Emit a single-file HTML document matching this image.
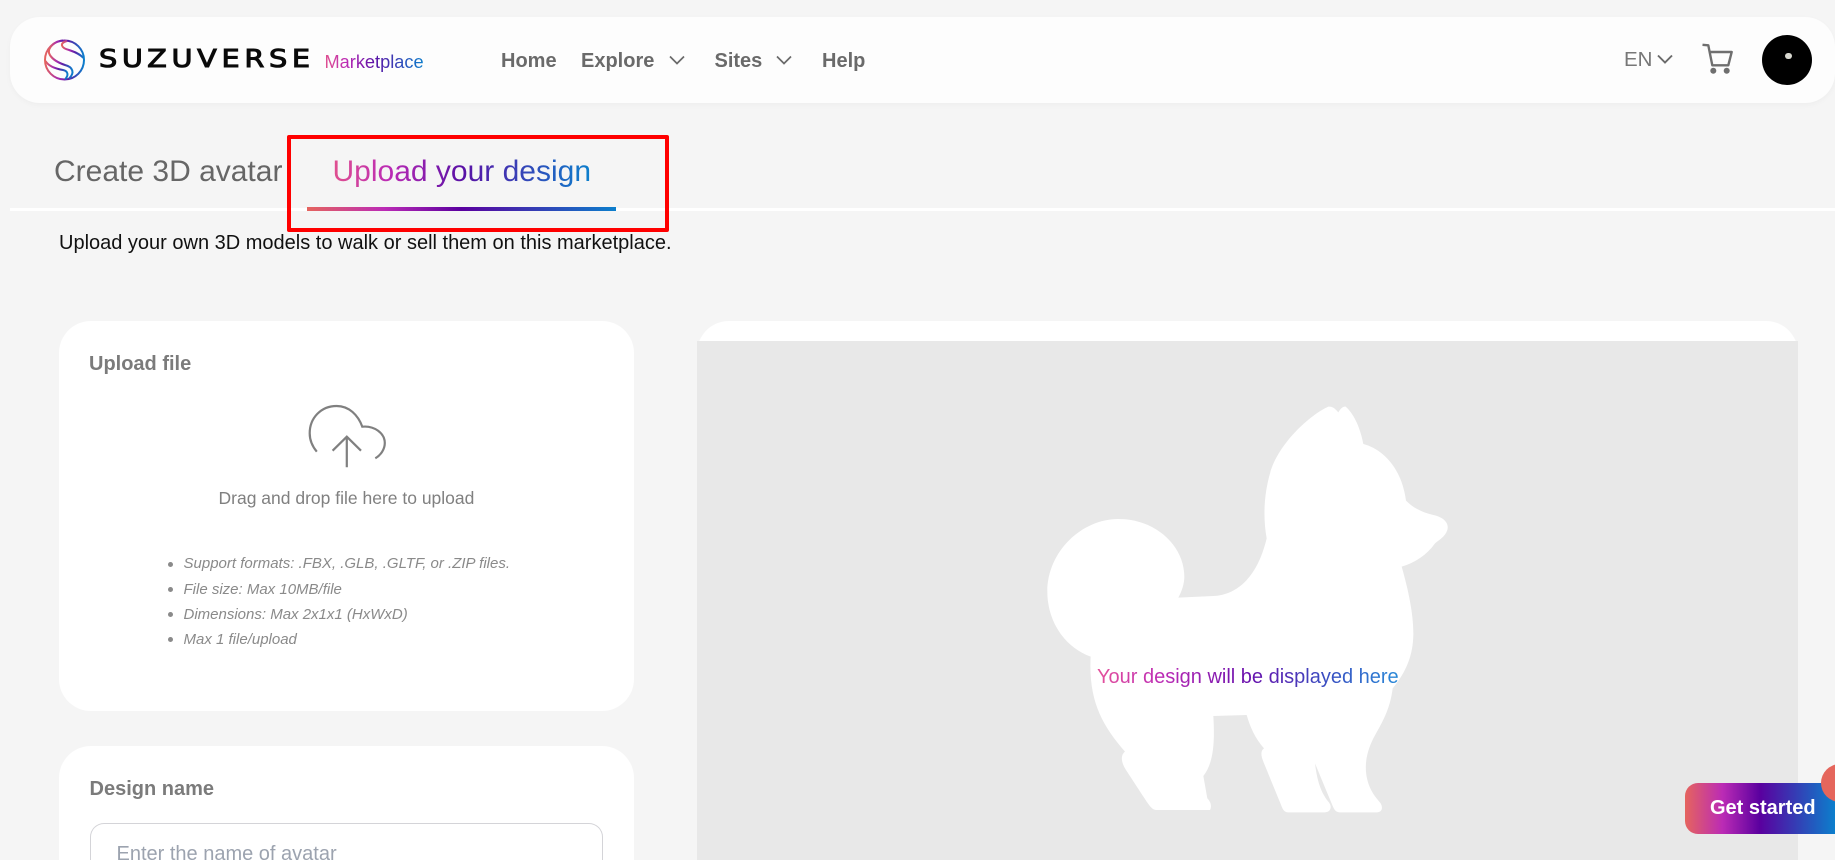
<!DOCTYPE html>
<html lang="en">
<head>
<meta charset="utf-8">
<title>Suzuverse Marketplace</title>
<style>
*{box-sizing:border-box;margin:0;padding:0}
html,body{width:1835px;height:860px;overflow:hidden;background:#f5f5f5;font-family:"Liberation Sans",sans-serif}
#wrap{position:relative;width:1835px;height:860px;overflow:hidden;background:#f5f5f5}
.a{position:absolute;white-space:nowrap}
.header{left:10px;top:17px;width:1825px;height:86px;background:#fdfdfd;border-radius:30px;box-shadow:0 2px 6px rgba(0,0,0,.03)}
.nav{font-weight:700;font-size:20px;line-height:22px;color:#6a6a6a;top:49.5px}
.grad{background:linear-gradient(90deg,#e0508f 0%,#bb2bb5 22%,#5a10a5 50%,#0c7fcc 100%);-webkit-background-clip:text;background-clip:text;color:transparent;-webkit-text-fill-color:transparent}
.card{background:#fff;border-radius:32px}
.h{font-weight:700;font-size:20px;line-height:22px;color:#7b7b7b}
.li{font-style:italic;font-size:15px;line-height:18px;color:#8a8a8a;left:183.5px}
.dot{width:5px;height:5px;border-radius:50%;background:#8a8a8a;left:168px}
</style>
</head>
<body>
<div id="wrap">
<div class="a header" style="width:1825px"></div>

<svg class="a" style="left:43px;top:39px" width="44" height="42" viewBox="0 0 44 42" fill="none">
<defs><linearGradient id="lg" x1="0" y1="0" x2="1" y2="0"><stop offset="0" stop-color="#e5645e"/><stop offset=".35" stop-color="#a52bb0"/><stop offset=".6" stop-color="#5a1fa5"/><stop offset="1" stop-color="#0c7fcc"/></linearGradient></defs>
<g stroke="url(#lg)" stroke-width="2" fill="none">
<circle cx="21.5" cy="21" r="19.5"/>
<path d="M20 1.500C11 2 5 9 6 14C8 20 16 24 22 26C30 28 32 34 26 39.500"/>
<path d="M24 2C16 4 18 9 26 11C32 13 37 15 40.500 19"/>
<path d="M2.500 22C6 28 14 30 20 31C25 32 26 36 22 40.500"/>
</g>
</svg>
<svg class="a" style="left:95px;top:40px" width="225" height="36">
<text transform="scale(1.15,1)" x="3.500" y="27" font-family="'DejaVu Sans',sans-serif" font-size="25" fill="#0a0a0a" stroke="#0a0a0a" stroke-width="1" textLength="183.500" lengthAdjust="spacing">SUZUVERSE</text>
</svg>
<div class="a grad" style="left:324.500px;top:51px;font-size:18.200px;line-height:22px">Marketplace</div>

<div class="a nav" style="left:501px">Home</div>
<div class="a nav" style="left:581px">Explore</div>
<svg class="a" style="left:668px;top:54px" width="18" height="12" fill="none" stroke="#6a6a6a" stroke-width="1.700"><path d="M2 2.500l7 7 7-7"/></svg>
<div class="a nav" style="left:714.500px">Sites</div>
<svg class="a" style="left:775px;top:54px" width="18" height="12" fill="none" stroke="#6a6a6a" stroke-width="1.700"><path d="M2 2.500l7 7 7-7"/></svg>
<div class="a nav" style="left:822px">Help</div>

<div class="a" style="left:1624px;top:48px;font-size:20.500px;line-height:24px;color:#777">EN</div>
<svg class="a" style="left:1656px;top:53px" width="18" height="12" fill="none" stroke="#6a6a6a" stroke-width="1.900"><path d="M2 2.500l7 7 7-7"/></svg>
<svg class="a" style="left:1702px;top:43px" width="32" height="32" fill="none" stroke="#6f6f6f" stroke-width="2.400">
<path d="M.5 1.800L6.300 2.300L10.300 22.300H26.300L29.700 9H8" stroke-linejoin="round"/>
<circle cx="11.300" cy="27.700" r="3" fill="#6f6f6f" stroke="none"/>
<circle cx="24.700" cy="27.700" r="3" fill="#6f6f6f" stroke="none"/>
</svg>
<div class="a" style="left:1762px;top:35px;width:50px;height:50px;border-radius:50%;background:#000"></div>
<div class="a" style="left:1785px;top:52.500px;width:6.500px;height:6.500px;border-radius:50%;background:#d8d8d0"></div>

<div class="a" style="left:10px;top:207.500px;width:1825px;height:3px;background:#fff"></div>
<div class="a" style="left:54px;top:154px;font-size:30px;line-height:36px;color:#666">Create 3D avatar</div>
<div class="a grad" style="left:332.500px;top:154px;font-size:30px;line-height:36px">Upload your design</div>
<div class="a" style="left:307px;top:207px;width:309px;height:4px;background:linear-gradient(90deg,#e5645e 0%,#bb2bb5 25%,#5a009f 50%,#0c7fcc 100%)"></div>
<div class="a" style="left:287px;top:135px;width:382px;height:97px;border:4px solid #f00;border-radius:2px"></div>
<div class="a" style="left:59px;top:232px;font-size:20px;line-height:22px;color:#111">Upload your own 3D models to walk or sell them on this marketplace.</div>

<div class="a card" style="left:59px;top:321px;width:575px;height:390px"></div>
<div class="a h" style="left:89px;top:353px">Upload file</div>
<svg class="a" style="left:306px;top:402px" width="84" height="70" fill="none" stroke="#808080" stroke-width="2.200">
<path d="M10.800 49.700C6 44 3.700 38 3.700 31.300C3.700 16 15 4 30.600 4C43 4 52 13 56.300 24.700C68 23.500 78.800 31 78.800 41C78.800 47 75 53 69.300 56.300"/>
<path d="M40.800 65.300V34.700M26.600 48.700L40.800 34.700L55 48.700"/>
</svg>
<div class="a" style="left:218.500px;top:487px;font-size:17.500px;line-height:22px;color:#808080">Drag and drop file here to upload</div>
<div class="a dot" style="top:561.500px"></div><div class="a li" style="top:555px">Support formats: .FBX, .GLB, .GLTF, or .ZIP files.</div>
<div class="a dot" style="top:586.500px"></div><div class="a li" style="top:580.500px">File size: Max 10MB/file</div>
<div class="a dot" style="top:611.500px"></div><div class="a li" style="top:605.500px">Dimensions: Max 2x1x1 (HxWxD)</div>
<div class="a dot" style="top:636.500px"></div><div class="a li" style="top:630.500px">Max 1 file/upload</div>

<div class="a card" style="left:59px;top:746px;width:575px;height:114px;border-radius:32px 32px 0 0"></div>
<div class="a h" style="left:89.500px;top:778px">Design name</div>
<div class="a" style="left:90px;top:823px;width:513px;height:37px;border:1px solid #d4d4d8;border-bottom:0;border-radius:14px 14px 0 0"></div>
<div class="a" style="left:116.500px;top:843px;height:17px;overflow:hidden;font-size:20px;line-height:22px;color:#9ca3af">Enter the name of avatar</div>

<div class="a card" style="left:697px;top:321px;width:1101px;height:539px;border-radius:32px 32px 0 0"></div>
<div class="a" style="left:697px;top:341px;width:1101px;height:519px;background:#e8e8e8"></div>
<svg class="a" style="left:1000px;top:380px" width="480" height="480" viewBox="0 0 1440 1440">
<path fill="#fff" d="M985 80C1000 78 1008 90 1015 97C1020 88 1028 78 1037 80C1065 105 1082 150 1090 192C1150 208 1205 265 1218 362C1240 385 1270 398 1300 405C1332 412 1348 430 1342 450C1335 470 1320 478 1305 490C1280 525 1245 548 1205 560C1225 630 1240 700 1240 760C1240 830 1215 880 1178 925C1170 990 1145 1030 1120 1075C1095 1125 1092 1170 1105 1210C1115 1240 1130 1255 1142 1270C1150 1285 1145 1297 1130 1297L1020 1297C1008 1297 1003 1290 998 1278L945 1150C952 1205 962 1235 985 1265C998 1280 992 1297 975 1297L865 1297C852 1297 848 1288 842 1272L790 1145C782 1125 782 1112 792 1105C765 1075 750 1040 740 1005L640 1008C645 1090 640 1150 610 1188L622 1255C632 1265 636 1278 630 1290L470 1290C458 1290 452 1282 440 1265L378 1170C362 1145 362 1125 375 1115C305 1035 265 960 272 830C190 800 142 720 142 635C142 515 245 417 355 417C470 417 553 500 553 590C553 612 545 635 535 653L640 648C705 645 770 600 800 475C790 420 790 350 810 280C835 190 930 105 985 80Z"/>
</svg>
<div class="a grad" style="left:1097px;top:666px;font-size:20px;line-height:22px;background-image:linear-gradient(90deg,#e5529c 0%,#bb2bb5 22%,#6a10ad 50%,#3a4bc0 75%,#2a8ad8 100%)">Your design will be displayed here</div>

<div class="a" style="left:1685px;top:783px;width:150px;height:51px;border-radius:13px 0 0 13px;background:linear-gradient(90deg,#e5645e 0%,#bb2bb5 25%,#5a009f 50%,#0c7fcc 100%)"></div>
<div class="a" style="left:1710px;top:797px;font-size:20px;font-weight:700;line-height:22px;color:#fff">Get started</div>
<div class="a" style="left:1821px;top:764px;width:14px;height:38px;overflow:hidden"><div style="width:38px;height:38px;border-radius:50%;background:#e5665c"></div></div>
</div>
</body>
</html>
